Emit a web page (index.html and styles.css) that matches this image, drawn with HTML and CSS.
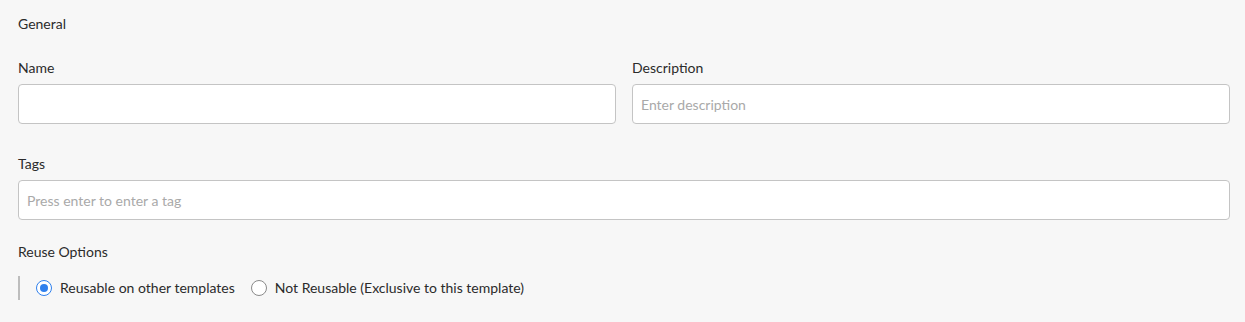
FILE: index.html
```html
<!DOCTYPE html>
<html lang="en">
<head>
    <meta charset="UTF-8">
    <meta name="viewport" content="width=device-width, initial-scale=1.0">
    <title>Template Settings</title>
    <link rel="stylesheet" href="styles.css">
</head>
<body>
    <div class="panel">
        <div class="section-title">General</div>

        <div class="row">
            <div class="field">
                <label class="field-label">Name</label>
                <input class="text-input" type="text">
            </div>
            <div class="field">
                <label class="field-label">Description</label>
                <input class="text-input" type="text" placeholder="Enter description">
            </div>
        </div>

        <div class="field tags">
            <label class="field-label">Tags</label>
            <input class="text-input" type="text" placeholder="Press enter to enter a tag">
        </div>

        <div class="field-label">Reuse Options</div>
        <div class="radio-group">
            <label class="radio">
                <span class="radio-dot checked"></span>
                Reusable on other templates
            </label>
            <label class="radio">
                <span class="radio-dot"></span>
                Not Reusable (Exclusive to this template)
            </label>
        </div>
    </div>
</body>
</html>
```

FILE: styles.css
```css
body {
    margin: 0;
    padding: 0;
    background-color: #f7f7f7;
    color: #2b2b2b;
    font-family: 'Lato', sans-serif;
    font-size: 14px;
}

.panel {
    padding: 16px 15px 0 18px;
}

.section-title {
    line-height: 16px;
    margin-bottom: 28px;
}

.row {
    display: flex;
    gap: 16px;
    margin-bottom: 32px;
}

.field {
    flex: 1;
    display: flex;
    flex-direction: column;
}

.field.tags {
    margin-bottom: 24px;
}

.field-label {
    line-height: 16px;
    margin-bottom: 8px;
}

.text-input {
    box-sizing: border-box;
    height: 40px;
    width: 100%;
    padding: 0 8px;
    border: 1px solid #c4c4c4;
    border-radius: 4px;
    background-color: #fff;
    font-family: 'Lato', sans-serif;
    font-size: 14px;
    color: #2b2b2b;
    outline: none;
}

.text-input::placeholder {
    color: #a9a9a9;
}

.radio-group {
    display: flex;
    align-items: center;
    gap: 16px;
    height: 24px;
    margin-top: 16px;
    padding-left: 16px;
    border-left: 2px solid #bdbdbd;
}

.radio {
    display: flex;
    align-items: center;
    gap: 8px;
    line-height: 16px;
}

.radio-dot {
    box-sizing: border-box;
    width: 16px;
    height: 16px;
    border: 1px solid #8a8a8a;
    border-radius: 50%;
    background-color: #fff;
    position: relative;
}

.radio-dot.checked {
    border-color: #2f80ed;
}

.radio-dot.checked::after {
    content: '';
    position: absolute;
    top: 3px;
    left: 3px;
    width: 8px;
    height: 8px;
    border-radius: 50%;
    background-color: #2f80ed;
}
```
